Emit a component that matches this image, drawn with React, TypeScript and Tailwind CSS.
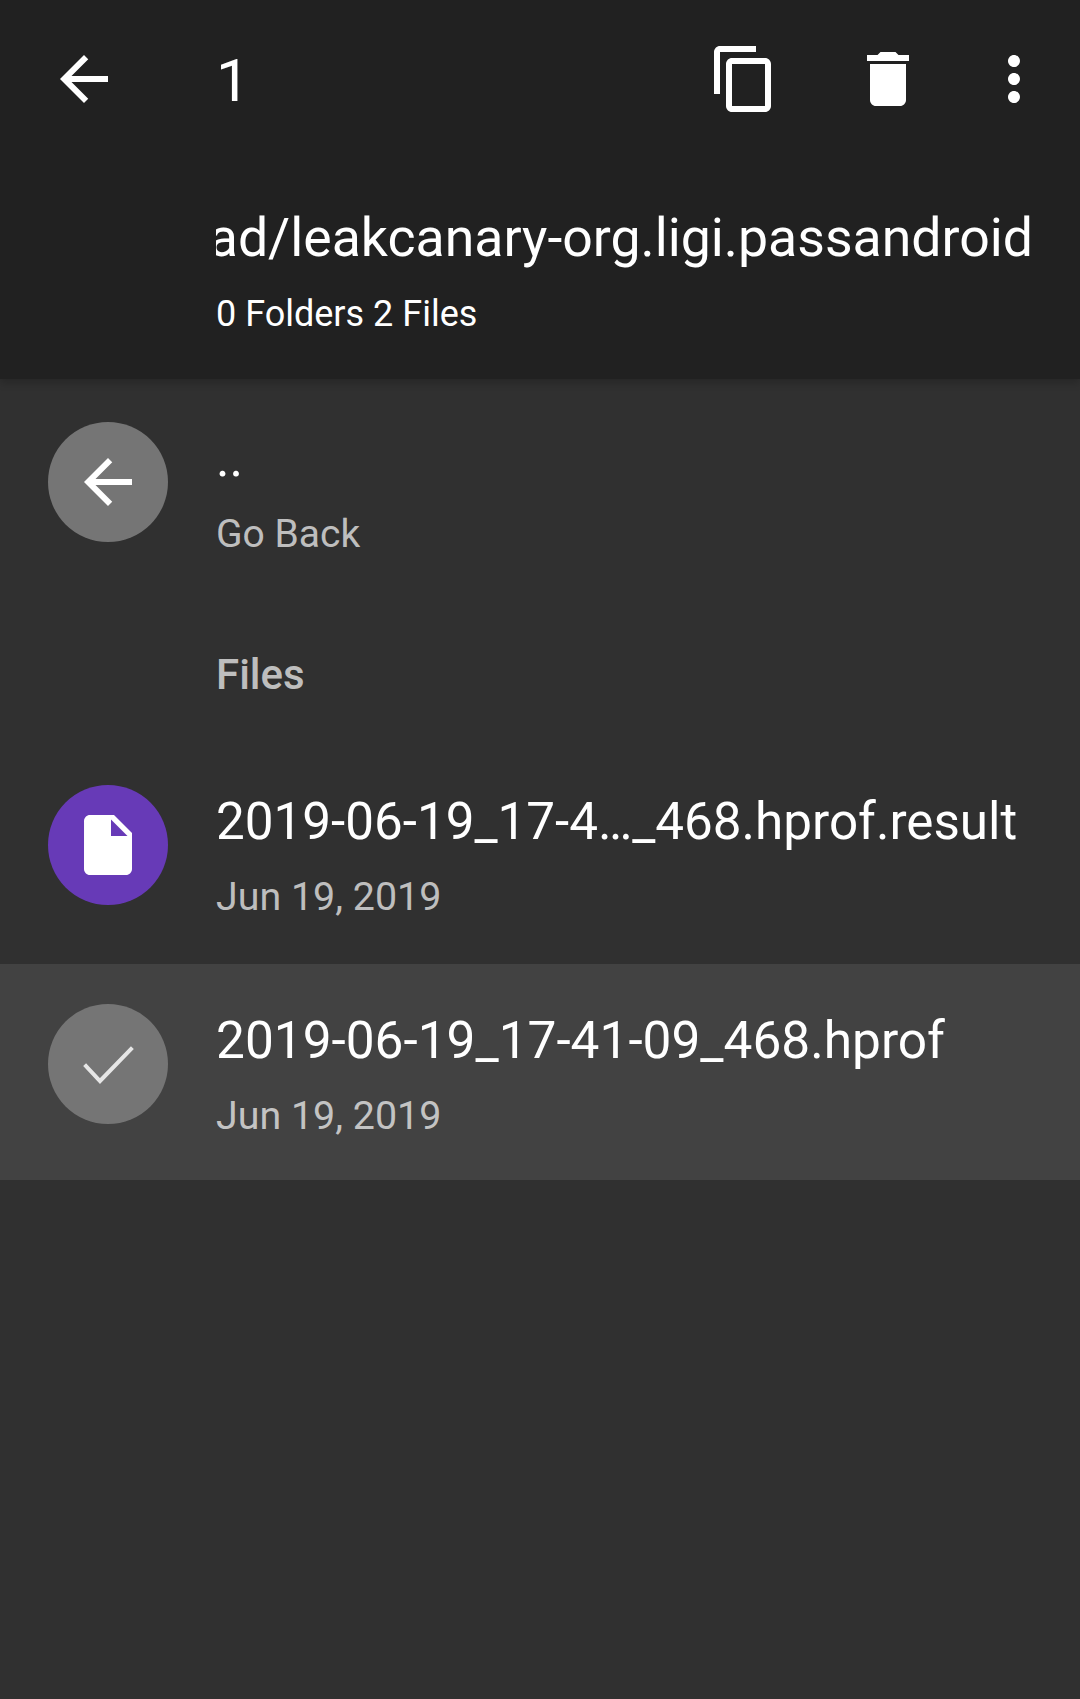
import { ReactNode } from 'react'

const Icon = ({ d, className = '' }: { d: string; className?: string }) => (
  <svg viewBox="0 0 24 24" className={`w-[72px] h-[72px] shrink-0 fill-current ${className}`}>
    <path d={d} />
  </svg>
)

const BACK = 'M20 11H7.83l5.59-5.59L12 4l-8 8 8 8 1.41-1.41L7.83 13H20v-2z'
const COPY = 'M16 1H4c-1.1 0-2 .9-2 2v14h2V3h12V1zm3 4H8c-1.1 0-2 .9-2 2v14c0 1.1.9 2 2 2h11c1.1 0 2-.9 2-2V7c0-1.1-.9-2-2-2zm0 16H8V7h11v14z'
const TRASH = 'M6 19c0 1.1.9 2 2 2h8c1.1 0 2-.9 2-2V7H6v12zM19 4h-3.5l-1-1h-5l-1 1H5v2h14V4z'
const MORE = 'M12 8c1.1 0 2-.9 2-2s-.9-2-2-2-2 .9-2 2 .9 2 2 2zm0 2c-1.1 0-2 .9-2 2s.9 2 2 2 2-.9 2-2-.9-2-2-2zm0 6c-1.1 0-2 .9-2 2s.9 2 2 2 2-.9 2-2-.9-2-2-2z'
const FILE = 'M6 2c-1.1 0-1.99.9-1.99 2L4 20c0 1.1.89 2 1.99 2H18c1.1 0 2-.9 2-2V8l-6-6H6zm7 7V3.5L18.5 9H13z'

function Row({ icon, circle, title, sub, className = '', titleClass = 'text-[51.4px]', subClass = 'text-[39.4px]' }: { icon: ReactNode; circle: string; title: string; sub: string; className?: string; titleClass?: string; subClass?: string }) {
  return (
    <div className={`flex pl-12 ${className}`}>
      <div className={`w-[120px] h-[120px] rounded-full flex items-center justify-center text-white ${circle}`}>{icon}</div>
      <div className="ml-12 min-w-0">
        <div className={`${titleClass} leading-[74px] text-white whitespace-nowrap`}>{title}</div>
        <div className={`${subClass} leading-[76px] text-white/70 whitespace-nowrap`}>{sub}</div>
      </div>
    </div>
  )
}

export default function App() {
  return (
    <div className="min-h-[1699px] bg-[#303030] font-['Roboto',sans-serif] overflow-hidden">
      <header className="h-[379px] bg-[#212121] text-white shadow-[0_4px_8px_rgba(0,0,0,0.2)] relative">
        <div className="flex items-center h-[158px] pl-12 pr-[30px]">
          <Icon d={BACK} />
          <div className="text-[60px] leading-[72px] ml-24 mt-1 flex-1">1</div>
          <Icon d={COPY} />
          <Icon d={TRASH} className="ml-[72px]" />
          <Icon d={MORE} className="ml-[54px]" />
        </div>
        <div className="ml-[216px] mr-[47px] mt-[44px] overflow-hidden flex justify-end text-[53.6px] leading-[72px] whitespace-nowrap">
          ad/leakcanary-org.ligi.passandroid
        </div>
        <div className="ml-[216px] mt-4 text-[36px] leading-[48px]">0 Folders 2 Files</div>
      </header>
      <Row className="h-[219px] pt-[43px]" subClass="text-[39px]" icon={<Icon d={BACK} />} circle="bg-[#757575]" title=".." sub="Go Back" />
      <div className="h-[147px] pl-[216px] pt-[49px] text-[42px] leading-[56px] font-medium text-white/70">Files</div>
      <Row className="h-[219px] pt-10" titleClass="text-[51.2px]" icon={<Icon d={FILE} />} circle="bg-[#673ab7]" title="2019-06-19_17-4…_468.hprof.result" sub="Jun 19, 2019" />
      <Row
        className="h-[216px] pt-10 bg-[#424242]"
        icon={
          <svg viewBox="0 0 72 72" className="w-[72px] h-[72px] text-[#e6e6e6]">
            <path d="M14 38 L28 53 L59 21" fill="none" stroke="currentColor" strokeWidth="4" strokeLinecap="square" />
          </svg>
        }
        circle="bg-[#757575]"
        title="2019-06-19_17-41-09_468.hprof"
        sub="Jun 19, 2019"
      />
    </div>
  )
}
